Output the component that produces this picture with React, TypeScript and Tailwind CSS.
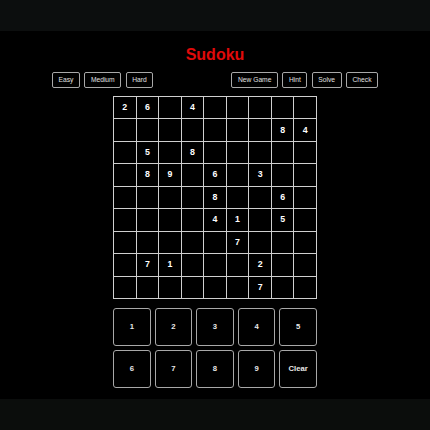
import React from "react";

const puzzle: number[][] = [
  [2, 6, 0, 4, 0, 0, 0, 0, 0],
  [0, 0, 0, 0, 0, 0, 0, 8, 4],
  [0, 5, 0, 8, 0, 0, 0, 0, 0],
  [0, 8, 9, 0, 6, 0, 3, 0, 0],
  [0, 0, 0, 0, 8, 0, 0, 6, 0],
  [0, 0, 0, 0, 4, 1, 0, 5, 0],
  [0, 0, 0, 0, 0, 7, 0, 0, 0],
  [0, 7, 1, 0, 0, 0, 2, 0, 0],
  [0, 0, 0, 0, 0, 0, 7, 0, 0],
];

const TopButton: React.FC<{ label: string }> = ({ label }) => (
  <button className="h-[16px] px-[5.5px] rounded-[2px] border border-[#a8a8a8] bg-black text-[6.7px] leading-none text-[#e0e0e0]">
    {label}
  </button>
);

export default function App() {
  return (
    <div
      className="w-[430px] h-[430px] flex flex-col bg-black"
      style={{ fontFamily: '"Liberation Sans", Arial, sans-serif' }}
    >
      <div className="h-[31px] bg-[#0c0e0e]" />
      <div className="h-[368px] flex flex-col items-center bg-black">
        <h1 className="mt-[14px] h-[20px] leading-[20px] text-[16px] font-bold text-[#e00a0a]">
          Sudoku
        </h1>
        <div className="mt-[7px] w-[326px] flex justify-between">
          <div className="flex gap-[4.5px]">
            <TopButton label="Easy" />
            <TopButton label="Medium" />
            <TopButton label="Hard" />
          </div>
          <div className="flex gap-[4.5px]">
            <TopButton label="New Game" />
            <TopButton label="Hint" />
            <TopButton label="Solve" />
            <TopButton label="Check" />
          </div>
        </div>
        <div className="mt-[8px] w-[204px] h-[203px] grid grid-cols-9 grid-rows-9 gap-px p-px bg-[#cfcfcf]">
          {puzzle.flatMap((row, r) =>
            row.map((v, c) => (
              <div
                key={`${r}-${c}`}
                className="bg-black flex items-center justify-center text-[8.8px] font-bold text-white"
              >
                {v ? v : ""}
              </div>
            ))
          )}
        </div>
        <div className="mt-[9px] w-[204px] grid grid-cols-5 gap-x-[4px] gap-y-[4.5px]">
          {["1", "2", "3", "4", "5", "6", "7", "8", "9", "Clear"].map((k) => (
            <button
              key={k}
              className="h-[37.5px] rounded-[3px] border border-[#a8a8a8] bg-black flex items-center justify-center text-[7.7px] font-bold text-[#e8e8e8]"
            >
              {k}
            </button>
          ))}
        </div>
      </div>
      <div className="h-[31px] bg-[#0b0d0c]" />
    </div>
  );
}
